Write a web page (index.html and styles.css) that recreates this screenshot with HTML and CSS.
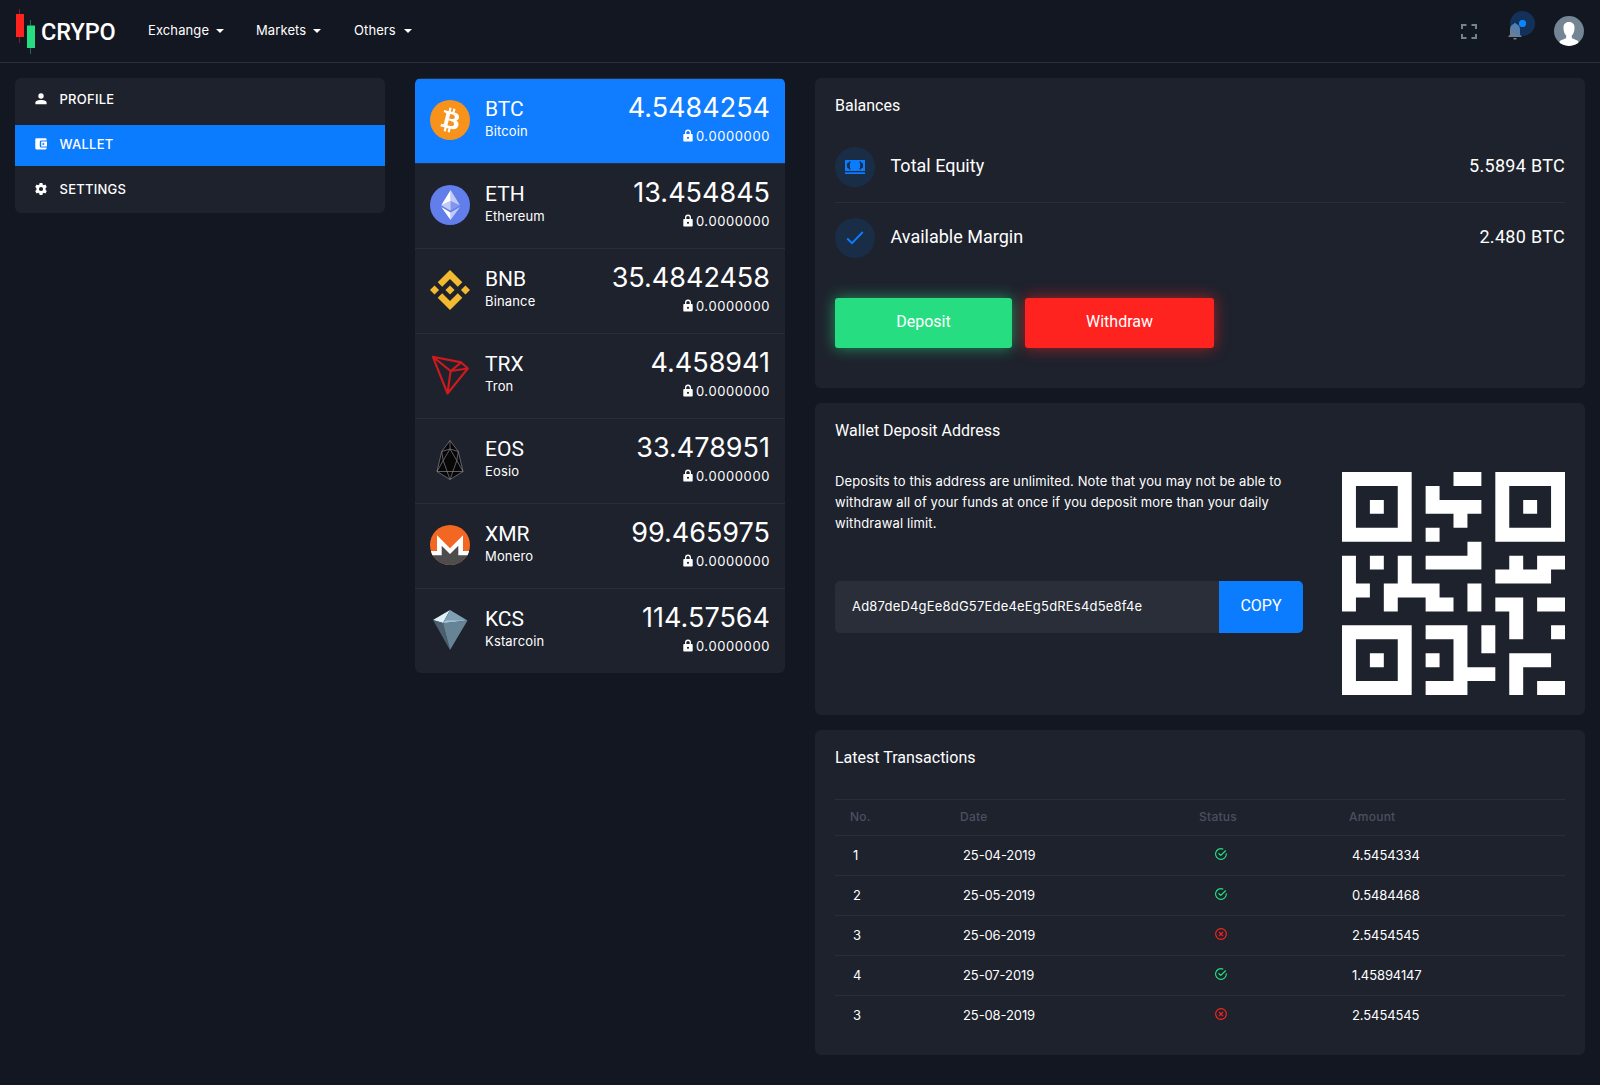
FILE: index.html
```html
<!DOCTYPE html>
<html lang="en">
<head>
<meta charset="utf-8">
<title>Crypo - Wallet</title>
<link rel="stylesheet" href="styles.css">
</head>
<body>
<svg class="defs" width="0" height="0">
  <symbol id="lock" viewBox="0 0 10 13"><path fill-rule="evenodd" d="M2 5V3.600a3 3 0 0 1 6 0V5h.7c.6 0 1 .4 1 1v5.500c0 .6-.4 1-1 1H1.300c-.6 0-1-.4-1-1V6c0-.6.4-1 1-1zM3.300 5h3.400V3.600a1.700 1.700 0 0 0-3.400 0zM5 7.700a1.100 1.100 0 1 0 0 2.200 1.100 1.100 0 0 0 0-2.200z"/></symbol>
  <symbol id="ok" viewBox="0 0 24 24"><path fill="none" stroke="currentColor" stroke-width="2.300" d="M22.500 10.500A10.700 10.700 0 1 1 16.500 2.300M7 10.500l4.500 4.500L21.500 5"/></symbol>
  <symbol id="fail" viewBox="0 0 24 24"><g fill="none" stroke="currentColor" stroke-width="2.300"><circle cx="12" cy="12" r="10.700"/><path d="M7.800 7.800l8.400 8.400M16.200 7.800l-8.400 8.400"/></g></symbol>
</svg>

<header class="topbar">
  <a class="logo">
    <svg width="21" height="46" viewBox="0 0 21 46"><path fill="#7d2029" d="M4 0h1v34H4z"/><path fill="#ff231f" d="M1 5h8v23H1z"/><path fill="#1f6b4d" d="M15 11h1v34h-1z"/><path fill="#26de81" d="M12 16.500h8V39h-8z"/></svg>
    <span>CRYPO</span>
  </a>
  <nav class="nav">
    <a class="nav-exchange">Exchange<i class="caret"></i></a>
    <a class="nav-markets">Markets<i class="caret"></i></a>
    <a class="nav-others">Others<i class="caret"></i></a>
  </nav>
  <div class="tools">
    <svg class="full" width="16" height="15" viewBox="0 0 16 15"><path fill="none" stroke="#728291" stroke-width="2" d="M1 5V1h4.500M10.500 1H15v4M15 10v4h-4.500M5.500 14H1v-4"/></svg>
    <div class="bell">
      <svg width="14" height="17" viewBox="0 0 14 17"><path fill="#6c7f91" d="M7 0c.7 0 1.200.5 1.200 1.100C10.800 1.700 12 3.800 12 6.500v5l1.700 1.900v.7H.300v-.7L2 11.500v-5c0-2.700 1.200-4.800 3.800-5.400C5.800.5 6.300 0 7 0zM5.200 15h3.600A1.800 1.800 0 0 1 5.200 15z"/></svg>
      <span class="pulse"></span>
    </div>
    <svg class="avatar" width="30" height="30" viewBox="0 0 30 30"><defs><clipPath id="round"><circle cx="15" cy="15" r="15"/></clipPath></defs><g clip-path="url(#round)"><path fill="#748693" d="M0 0h30v30H0z"/><path fill="#fff" d="M15 6c3.800 0 5.700 2.300 5.500 6.200-.1 3.300-1 5.800-2.700 7.300v2.300c0 1.200 6.200 1.700 7 4.700V30H5.200v-3.500c.8-3 7-3.500 7-4.700v-2.300c-1.700-1.500-2.600-4-2.700-7.300C9.300 8.300 11.200 6 15 6z"/></g></svg>
  </div>
</header>

<main class="page">
  <aside class="card side">
    <a><svg width="12" height="12" viewBox="0 0 12 12"><circle cx="6" cy="3" r="2.700"/><path d="M.4 11.200V9.600C.4 7.700 3 6.900 6 6.900s5.600.8 5.600 2.700v1.600z"/></svg>PROFILE</a>
    <a class="active"><svg width="12" height="12" viewBox="0 0 12 12"><path fill-rule="evenodd" d="M1.500.3h9c.6 0 1.100.5 1.100 1.100v1H6.300C5.400 2.400 4.800 3 4.800 3.900v4.200c0 .9.600 1.500 1.500 1.500h5.300v.700c0 .6-.5 1.100-1.100 1.100h-9c-.7 0-1.200-.5-1.200-1.100V1.500C.3.800.8.3 1.500.3zM6.200 3.500H12v5H6.200zM8.300 5a1 1 0 1 0 0 2 1 1 0 0 0 0-2z"/></svg>WALLET</a>
    <a><svg width="12" height="12" viewBox="0 0 12 12"><path fill-rule="evenodd" d="M4.600 0h2.800l.3 1.600 1.200.6 1.500-.6 1.400 2.300-1.200 1V7l1.200 1-1.400 2.400-1.500-.6-1.200.7L7.400 12H4.600l-.3-1.500-1.200-.7-1.500.6L.2 8l1.200-1V4.900L.2 3.900l1.400-2.300 1.500.6 1.200-.6zM6 3.900a2.100 2.100 0 1 0 0 4.200 2.100 2.100 0 0 0 0-4.200z"/></svg>SETTINGS</a>
  </aside>

  <section class="card coins">
    <div class="coin active">
      <svg width="40" height="40" viewBox="0 0 32 32"><circle cx="16" cy="16" r="16" fill="#f7931a"/><path fill="#fff" d="M23.189 14.020c.314-2.096-1.283-3.223-3.465-3.975l.708-2.840-1.728-.43-.690 2.765c-.454-.114-.920-.220-1.385-.326l.695-2.783L15.596 6l-.708 2.839c-.376-.086-.746-.170-1.104-.260l.002-.009-2.384-.595-.460 1.846s1.283.294 1.256.312c.700.175.826.638.805 1.006l-.806 3.235c.48.012.110.030.180.057l-.183-.045-1.130 4.532c-.086.212-.303.531-.793.410.018.025-1.256-.313-1.256-.313l-.858 1.978 2.250.561c.418.105.828.215 1.231.318l-.715 2.872 1.727.43.708-2.840c.472.127.930.245 1.378.357l-.706 2.828 1.728.43.715-2.866c2.948.558 5.164.333 6.097-2.333.752-2.146-.037-3.385-1.588-4.192 1.130-.260 1.980-1.003 2.207-2.538zm-3.950 5.538c-.533 2.147-4.148.986-5.320.695l.950-3.805c1.172.293 4.929.872 4.370 3.110zm.535-5.569c-.487 1.953-3.495.960-4.470.717l.860-3.450c.975.243 4.118.696 3.610 2.733z"/></svg>
      <div class="name"><b>BTC</b><span>Bitcoin</span></div>
      <div class="amount"><b>4.5484254</b><span><svg width="10" height="13"><use href="#lock"/></svg>0.0000000</span></div>
    </div>
    <div class="coin">
      <svg width="40" height="40" viewBox="0 0 32 32"><circle cx="16" cy="16" r="16" fill="#627eea"/><path fill="#fff" fill-opacity=".6" d="M16.498 4v8.870l7.497 3.350zM16.498 21.968v6.027L24 17.616z"/><path fill="#fff" d="M16.498 4L9 16.220l7.498-3.350zM16.498 27.995v-6.028L9 17.616z"/><path fill="#fff" fill-opacity=".2" d="M16.498 20.573l7.497-4.353-7.497-3.348z"/><path fill="#fff" fill-opacity=".6" d="M9 16.220l7.498 4.353v-7.701z"/></svg>
      <div class="name"><b>ETH</b><span>Ethereum</span></div>
      <div class="amount"><b>13.454845</b><span><svg width="10" height="13"><use href="#lock"/></svg>0.0000000</span></div>
    </div>
    <div class="coin">
      <svg width="40" height="40" viewBox="0 0 40 40"><path fill="#f3ba2f" d="M12.230 16.780L20 9.020l7.770 7.770 4.520-4.520L20 0 7.710 12.260zM0 20l4.520-4.520L9.040 20l-4.520 4.520zM12.230 23.220L20 30.980l7.770-7.770 4.520 4.520L20 40 7.710 27.740zM30.960 20l4.520-4.520L40 20l-4.520 4.520zM24.580 20L20 15.410 15.410 20 20 24.580z"/></svg>
      <div class="name"><b>BNB</b><span>Binance</span></div>
      <div class="amount"><b>35.4842458</b><span><svg width="10" height="13"><use href="#lock"/></svg>0.0000000</span></div>
    </div>
    <div class="coin">
      <svg width="40" height="40" viewBox="0 0 40 40"><path fill="none" stroke="#cf1a1d" stroke-width="2.100" stroke-linejoin="round" d="M2.800 1.700L31.300 7.400 37.800 13.500 17.500 38.500zM2.800 1.700L20.600 16 17.500 38.500M20.600 16L31.300 7.400M20.600 16L37.800 13.500"/></svg>
      <div class="name"><b>TRX</b><span>Tron</span></div>
      <div class="amount"><b>4.458941</b><span><svg width="10" height="13"><use href="#lock"/></svg>0.0000000</span></div>
    </div>
    <div class="coin">
      <svg width="40" height="40" viewBox="0 0 40 40"><g stroke="#85838a" stroke-width=".7" stroke-linejoin="round"><path fill="#070708" d="M20 .5L28.300 11.500 33 31.500 20 39.500 7 31.500 11.700 11.500z"/><path fill="none" d="M20 .5V9L28.300 11.500M20 9L11.700 11.500M20 9L13.200 20.500 20 39.500 26.800 20.500zM11.700 11.500L13.200 20.500 7 31.500H33L26.800 20.500 28.300 11.500"/></g></svg>
      <div class="name"><b>EOS</b><span>Eosio</span></div>
      <div class="amount"><b>33.478951</b><span><svg width="10" height="13"><use href="#lock"/></svg>0.0000000</span></div>
    </div>
    <div class="coin">
      <svg width="40" height="40" viewBox="0 0 40 40"><circle cx="20" cy="20" r="20" fill="#f26822"/><path fill="#4d4d4d" d="M2.400 29.500A20 20 0 0 0 37.600 29.500L28 20.500 20 28l-8-7.500z"/><path fill="#fff" d="M.9 26H7V10.300L20 23.300 33 10.300V26h6.100a20 20 0 0 1-1.500 4.200H28.300V20.700L20 28.900l-8.300-8.200v9.500H2.400A20 20 0 0 1 .9 26z"/></svg>
      <div class="name"><b>XMR</b><span>Monero</span></div>
      <div class="amount"><b>99.465975</b><span><svg width="10" height="13"><use href="#lock"/></svg>0.0000000</span></div>
    </div>
    <div class="coin">
      <svg width="40" height="40" viewBox="0 0 40 40"><path fill="#dff2fa" d="M20 0L3 10l10 3z"/><path fill="#7f9fb5" d="M20 0l17.500 10.500L13 13z"/><path fill="#a3c3dc" d="M16 10.500L37.500 10.500 13 13.300z"/><path fill="#4c5f6e" d="M3 10l10 3 7 27z"/><path fill="#678496" d="M13 13.200l24.500-2.700L20 40z"/></svg>
      <div class="name"><b>KCS</b><span>Kstarcoin</span></div>
      <div class="amount"><b>114.57564</b><span><svg width="10" height="13"><use href="#lock"/></svg>0.0000000</span></div>
    </div>
  </section>

  <div class="right">
    <section class="card balances">
      <h2>Balances</h2>
      <div class="balance">
        <span class="badge"><svg width="20" height="14" viewBox="0 0 20 14"><path fill="#0c7cff" fill-rule="evenodd" d="M0 0h20v11H0zM5.800 1.500H4.300L3 3.300H2v4.400h1l1.300 1.800h1.500C4.300 7 4.300 4 5.800 1.500zM14.200 1.500h1.500L17 3.300h1v4.400h-1l-1.300 1.800h-1.500c1.500-2.500 1.500-5.500 0-8zM0 12.300h20V14H0z"/></svg></span>
        <span class="label">Total Equity</span><span class="value">5.5894 BTC</span>
      </div>
      <div class="balance">
        <span class="badge"><svg width="18" height="14" viewBox="0 0 18 14"><path fill="none" stroke="#0c7cff" stroke-width="2" d="M1.200 7.500L6 12.200 16.800 1"/></svg></span>
        <span class="label">Available Margin</span><span class="value">2.480 BTC</span>
      </div>
      <div class="actions"><button class="deposit">Deposit</button><button class="withdraw">Withdraw</button></div>
    </section>

    <section class="card address">
      <div class="address-info">
        <h2>Wallet Deposit Address</h2>
        <p>Deposits to this address are unlimited. Note that you may not be able to<br>withdraw all of your funds at once if you deposit more than your daily<br>withdrawal limit.</p>
        <div class="copy"><span>Ad87deD4gEe8dG57Ede4eEg5dREs4d5e8f4e</span><button>COPY</button></div>
      </div>
      <svg class="qr" width="223" height="223" viewBox="0 0 16 16"><path fill="#fff" fill-rule="evenodd" d="M0 0h5v5H0zM1 1v3h3V1zM2 2h1v1H2zM11 0h5v5h-5zM12 1v3h3V1zM13 2h1v1h-1zM0 11h5v5H0zM1 12v3h3v-3zM2 13h1v1H2zM8 0h2v1H8zM6 1h1v1h3v1H9v1H8V3H6zM6 4h1v1H6zM9 5h1v2H6V6h3zM0 6h1v2h1v1H1v1H0zM2 6h1v1H2zM4 6h1v2h2v1h1v1H6V9H4v1H3V8h1zM9 8h1v2H9zM12 6h1v1h1V6h2v1h-1v1h-4V7h1zM11 9h2v3h-1v-2h-1zM14 9h2v1h-2zM15 11h1v1h-1zM6 11h3v3h2v1H9v1H6v-1h2v-3H6zM6 13h1v1H6zM10 11h1v2h-1zM12 13h3v1h-2v2h-1zM14 15h2v1h-2z"/></svg>
    </section>

    <section class="card transactions">
      <h2>Latest Transactions</h2>
      <table>
        <thead><tr><th class="no">No.</th><th class="date">Date</th><th class="status">Status</th><th>Amount</th></tr></thead>
        <tbody>
          <tr><td>1</td><td>25-04-2019</td><td class="ok"><svg width="12" height="12"><use href="#ok"/></svg></td><td>4.5454334</td></tr>
          <tr><td>2</td><td>25-05-2019</td><td class="ok"><svg width="12" height="12"><use href="#ok"/></svg></td><td>0.5484468</td></tr>
          <tr><td>3</td><td>25-06-2019</td><td class="fail"><svg width="12" height="12"><use href="#fail"/></svg></td><td>2.5454545</td></tr>
          <tr><td>4</td><td>25-07-2019</td><td class="ok"><svg width="12" height="12"><use href="#ok"/></svg></td><td>1.45894147</td></tr>
          <tr><td>3</td><td>25-08-2019</td><td class="fail"><svg width="12" height="12"><use href="#fail"/></svg></td><td>2.5454545</td></tr>
        </tbody>
      </table>
    </section>
  </div>
</main>
</body>
</html>
```

FILE: styles.css
```css
* { box-sizing: border-box; }
body {
  margin: 0;
  background: #131722;
  color: #fff;
  font: 400 13px/21px Inter, "Liberation Sans", sans-serif;
}
svg { display: block; flex: none; fill: currentColor; }
.defs { position: absolute; }
h2, p { margin: 0; }
h2, .balance, button { font-family: Roboto, "Liberation Sans", sans-serif; font-weight: 400; }
button { border: 0; color: #fff; font-size: 16px; padding: 0; }

/* Top bar */
.topbar {
  display: flex;
  align-items: flex-start;
  height: 63px;
  padding: 0 16px 0 15px;
  border-bottom: 1px solid #2a2e39;
}
.logo { display: flex; width: 133px; padding-top: 9px; }
.logo span {
  padding: 9px 0 0 5px;
  font: 500 23.500px/28px Roboto, sans-serif;
  letter-spacing: -.1px;
}
.nav { display: flex; padding-top: 20px; letter-spacing: .1px; }
.nav a { display: flex; align-items: center; justify-content: space-between; height: 21px; }
.nav-exchange { width: 76px; margin-right: 32px; }
.nav-markets { width: 65px; margin-right: 33px; }
.nav-others { width: 58px; }
.caret { border: 4.500px solid transparent; border-top-color: #fff; border-bottom: 0; }
.tools { display: flex; margin-left: auto; }
.full { margin-top: 24px; }
.bell { position: relative; margin: 23px 32px 0 31px; }
.pulse {
  position: absolute;
  left: 2px;
  top: -12px;
  width: 25px;
  height: 25px;
  border-radius: 50%;
  background: radial-gradient(circle, #0c84ff 3.300px, rgba(20, 125, 255, .25) 4px);
}
.avatar { margin-top: 16px; }

/* Page columns */
.page {
  display: grid;
  grid-template-columns: 370px 370px 770px;
  gap: 30px;
  align-items: start;
  padding: 15px;
}
.card { background: #1e222d; border-radius: 6px; overflow: hidden; }

.side { padding: 2px 0 3px; height: 135px; }
.side a {
  display: flex;
  align-items: center;
  gap: 12.500px;
  height: 41px;
  margin-bottom: 4px;
  padding: 0 20px 3px;
  font-weight: 500;
  letter-spacing: .25px;
}
.side .active { background: #0c7cff; }

/* Coin list */
.coin {
  display: flex;
  height: 85px;
  border-top: 1px solid #2a2e39;
  padding: 21px 15px 0;
}
.coin.active { background: #107cff; background-clip: padding-box; }
.name { margin-left: 15px; }
.name b, .amount b { display: block; font-weight: 400; }
.name b { font: 400 21px/26px Roboto, sans-serif; margin-top: -4px; }
.name span { display: block; line-height: 18px; letter-spacing: .15px; }
.amount { margin-left: auto; text-align: right; }
.amount b { font-size: 27px; line-height: 30px; margin-top: -7px; }
.amount span { display: flex; justify-content: flex-end; gap: 3px; line-height: 20px; margin-top: 3px; letter-spacing: .6px; }
.amount span svg { margin-top: 3px; }

/* Right column */
.right { display: grid; gap: 15px; }
.right .card { padding: 17px 20px; }
h2 { font-size: 16px; line-height: 21px; }
.balances { height: 310px; }
.balances h2 { margin-bottom: 16px; }
.balance {
  display: flex;
  align-items: center;
  height: 71px;
  gap: 15.500px;
  font-size: 18px;
}
.balance:nth-of-type(1) { height: 70px; }
.balance + .balance { border-top: 1px solid #2a2e39; }
.label, .value { padding-bottom: 3px; }
.value { margin-left: auto; letter-spacing: .3px; }
.badge {
  display: grid;
  place-items: center;
  width: 40px;
  height: 40px;
  border-radius: 50%;
  background: #192d47;
}
.actions { display: flex; gap: 13px; margin-top: 25px; }
.actions button { height: 50px; border-radius: 3px; padding-bottom: 3px; }
.deposit { width: 177px; background: #26de81; box-shadow: 0 0 15px rgba(38, 222, 129, .6); }
.withdraw { width: 189px; background: #ff231f; box-shadow: 0 0 15px rgba(255, 35, 31, .6); }

.address { display: flex; justify-content: space-between; height: 312px; }
.address-info { width: 468px; }
.address p { margin-top: 30px; white-space: nowrap; letter-spacing: .12px; }
.copy { display: flex; margin-top: 47px; height: 52px; border-radius: 5px; overflow: hidden; }
.copy span { width: 384px; padding: 15px 17px; background: #2a2e39; letter-spacing: .2px; }
.copy button { width: 84px; background: #0c7cff; padding-bottom: 3px; }
.qr { margin-top: 52px; }

.transactions { height: 325px; }
table { width: 100%; margin-top: 31px; border-collapse: separate; border-spacing: 0; table-layout: fixed; }
.no { width: 110px; }
.date { width: 239px; }
.status { width: 150px; }
th {
  height: 36px;
  padding: 0 15px 2px;
  border-top: 1px solid #2a2e39;
  color: #4a5060;
  font-size: 12px;
  font-weight: 500;
  letter-spacing: .25px;
  text-align: left;
}
td { height: 40px; padding: 0 18px 1px; border-top: 1px solid #2a2e39; letter-spacing: -.1px; }
td svg { margin: -2px 0 0 13px; }
.ok { color: #26de81; }
.fail { color: #ff231f; }
```
